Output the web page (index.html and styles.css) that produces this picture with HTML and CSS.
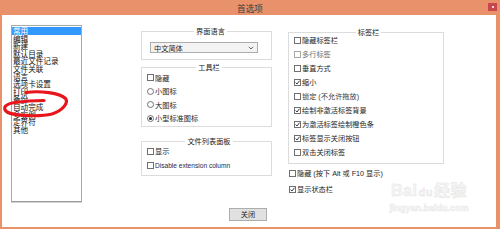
FILE: index.html
```html
<!DOCTYPE html>
<html lang="zh-CN">
<head>
<meta charset="utf-8">
<title>首选项</title>
<link rel="stylesheet" href="styles.css">
</head>
<body>
<div class="window">
  <div class="titlebar">
    <span class="title">首选项</span>
    <span class="close-btn"><span class="close-glyph"></span></span>
  </div>
  <div class="content">
    <div class="main">
      <ul class="nav">
        <li class="selected">常用</li>
        <li>编辑</li>
        <li>新建</li>
        <li>默认目录</li>
        <li>最近文件记录</li>
        <li>文件关联</li>
        <li>语言</li>
        <li>选项卡设置</li>
        <li>打印</li>
        <li>备份</li>
        <li>自动完成</li>
        <li>多实例</li>
        <li>定界符</li>
        <li>其他</li>
      </ul>
      <div class="col-mid">
        <fieldset class="group g-lang">
          <legend>界面语言</legend>
          <div class="select">
            <span>中文简体</span>
            <svg class="chev" width="6" height="4" viewBox="0 0 6 4"><path d="M0.8 0.8 L3 3 L5.2 0.8" fill="none" stroke="#555" stroke-width="0.9"/></svg>
          </div>
        </fieldset>
        <fieldset class="group g-toolbar">
          <legend>工具栏</legend>
          <div class="opt"><span class="cb"></span>隐藏</div>
          <div class="opt"><span class="rb"></span>小图标</div>
          <div class="opt"><span class="rb"></span>大图标</div>
          <div class="opt"><span class="rb on"></span>小型标准图标</div>
        </fieldset>
        <fieldset class="group g-files">
          <legend>文件列表面板</legend>
          <div class="opt row14"><span class="cb"></span>显示</div>
          <div class="opt row14 latin"><span class="cb"></span>Disable extension column</div>
        </fieldset>
      </div>
      <div class="col-right">
        <fieldset class="group g-tabs">
          <legend>标签栏</legend>
          <div class="opt row14"><span class="cb"></span>隐藏标签栏</div>
          <div class="opt row14 dim"><span class="cb dimbox"></span>多行标签</div>
          <div class="opt row14"><span class="cb"></span>垂直方式</div>
          <div class="opt row14"><span class="cb"><svg viewBox="0 0 5 5" width="5" height="5"><path d="M0.6 2.5 L2 4 L4.5 0.7" fill="none" stroke="#222" stroke-width="0.9"/></svg></span>缩小</div>
          <div class="opt row14 dim2"><span class="cb"></span>锁定 (不允许拖放)</div>
          <div class="opt row14"><span class="cb"><svg viewBox="0 0 5 5" width="5" height="5"><path d="M0.6 2.5 L2 4 L4.5 0.7" fill="none" stroke="#222" stroke-width="0.9"/></svg></span>绘制非激活标签背景</div>
          <div class="opt row14"><span class="cb"><svg viewBox="0 0 5 5" width="5" height="5"><path d="M0.6 2.5 L2 4 L4.5 0.7" fill="none" stroke="#222" stroke-width="0.9"/></svg></span>为激活标签绘制橙色条</div>
          <div class="opt row14"><span class="cb"><svg viewBox="0 0 5 5" width="5" height="5"><path d="M0.6 2.5 L2 4 L4.5 0.7" fill="none" stroke="#222" stroke-width="0.9"/></svg></span>标签显示关闭按钮</div>
          <div class="opt row14"><span class="cb"></span>双击关闭标签</div>
        </fieldset>
        <div class="opt row16 loose first"><span class="cb"></span>隐藏 (按下 Alt 或 F10 显示)</div>
        <div class="opt row16 loose"><span class="cb"><svg viewBox="0 0 5 5" width="5" height="5"><path d="M0.6 2.5 L2 4 L4.5 0.7" fill="none" stroke="#222" stroke-width="0.9"/></svg></span>显示状态栏</div>
      </div>
    </div>
    <div class="footer">
      <button class="btn" type="button">关闭</button>
    </div>
  </div>
  <div class="watermark">
    <div class="wm-logo">Bai<span class="wm-du">du</span>经验</div>
    <div class="wm-url">jingyan.baidu.com</div>
  </div>
  <svg class="annotation" width="500" height="229" viewBox="0 0 500 229">
    <path d="M26 92.5 C40 90.5 60 93 65.5 98.5 C69 103 62 111 52 114 C40 117 14 116 7 112 C2 108 5 104 15 102.5 C25 101 36 100.5 44 100.5" fill="none" stroke="#e8161c" stroke-width="3.2" stroke-linecap="round" stroke-linejoin="round"/>
  </svg>
</div>
</body>
</html>
```
FILE: styles.css
```css
html, body {
  margin: 0;
  padding: 0;
  background: #ffffff;
}

.window {
  position: relative;
  width: 500px;
  height: 229px;
  background: #e9916b;
  display: flex;
  flex-direction: column;
  overflow: hidden;
  font-family: "Liberation Sans", "Noto Sans CJK SC", sans-serif;
  color: #1e1e1e;
}

.titlebar {
  height: 15px;
  display: grid;
  grid-template-columns: 1fr auto 1fr;
  align-items: center;
}

.title {
  grid-column: 2;
  font-family: "Noto Sans CJK SC", sans-serif;
  font-size: 8.6px;
  line-height: 10px;
  color: #3a3a3a;
}

.close-btn {
  grid-column: 3;
  justify-self: end;
  width: 9px;
  height: 8px;
  margin-right: 3px;
  margin-top: -1px;
  background: #c8474b;
  display: flex;
  align-items: center;
  justify-content: center;
}

.close-glyph {
  width: 2px;
  height: 2px;
  background: #f4d6d6;
}

.content {
  flex: 1;
  background: #ffffff;
  margin: 0 4px 2px 2px;
  padding-top: 10px;
}

.main {
  display: flex;
  align-items: flex-start;
  padding-left: 9px;
}

.nav {
  box-sizing: border-box;
  width: 71px;
  height: 177px;
  margin: 0;
  padding: 1px 0 0;
  list-style: none;
  border: 1px solid #a9a9a9;
  border-bottom-color: #9a9a9a;
  box-shadow: 0 1px 0 #d4d4d4;
  font-family: "Noto Sans CJK SC", sans-serif;
  font-size: 7.6px;
  line-height: 7.6px;
  color: #111;
}

.nav li {
  height: 7.6px;
  padding-left: 1px;
  white-space: nowrap;
}

.nav li.selected {
  background: #3399ff;
  color: #ffffff;
}

.col-mid {
  width: 131px;
  margin-left: 59px;
  margin-top: 6px;
}

.col-right {
  width: 156px;
  margin-left: 16px;
  margin-top: 7px;
}

.group {
  margin: 0;
  border: 1px solid #dcdcdc;
  min-inline-size: 0;
  font-size: 7.2px;
}

.group legend {
  margin: 0 auto;
  padding: 0 2px;
  line-height: 1px;
  font-family: "Noto Sans CJK SC", sans-serif;
  font-size: 7.2px;
  color: #222;
}

.g-lang {
  padding: 10px 0 6px 8px;
}

.g-toolbar {
  margin-top: 7px;
  padding: 3px 0 1px 5px;
}

.g-files {
  margin-top: 14px;
  padding: 2px 0 3px 5px;
}

.g-tabs {
  padding: 0 0 4px 5px;
}

.select {
  box-sizing: border-box;
  width: 108px;
  height: 11px;
  border: 1px solid #adadad;
  background: #f3f3f3;
  display: flex;
  align-items: center;
  justify-content: space-between;
  padding: 0 3px 0 3px;
  font-family: "Noto Sans CJK SC", sans-serif;
  font-size: 7.2px;
}

.chev {
  display: block;
}

.opt {
  height: 13.5px;
  display: flex;
  align-items: center;
  white-space: nowrap;
  font-size: 7.2px;
}

.opt.row14 {
  height: 14px;
}

.opt.row16 {
  height: 16px;
}

.opt.loose {
  margin-left: 1px;
}

.opt.first {
  margin-top: 1px;
}

.opt.latin {
  font-size: 6.6px;
  color: #1e2a50;
}

.opt.dim {
  color: #6d6d6d;
}

.opt.dim2 {
  color: #3c3c3c;
}

.cb {
  box-sizing: border-box;
  width: 7px;
  height: 7px;
  border: 1px solid #707070;
  background: #ffffff;
  margin-right: 1px;
  flex: none;
  display: flex;
  align-items: center;
  justify-content: center;
}

.cb svg {
  display: block;
}

.cb.dimbox {
  border-color: #a6a6a6;
}

.rb {
  box-sizing: border-box;
  width: 7px;
  height: 7px;
  border: 1px solid #707070;
  border-radius: 50%;
  background: #ffffff;
  margin-right: 1px;
  flex: none;
  display: flex;
  align-items: center;
  justify-content: center;
}

.rb.on::after {
  content: "";
  width: 3px;
  height: 3px;
  border-radius: 50%;
  background: #222;
}

.footer {
  display: flex;
  justify-content: center;
  padding-right: 2px;
  margin-top: 6px;
}

.btn {
  box-sizing: border-box;
  width: 38px;
  height: 13px;
  margin: 0;
  padding: 0;
  border: 1px solid #adadad;
  background: #e1e1e1;
  font-family: "Noto Sans CJK SC", sans-serif;
  font-size: 7.2px;
  line-height: 11px;
  color: #1e1e1e;
}

.watermark {
  position: absolute;
  left: 383px;
  top: 180px;
  width: 92px;
  text-align: center;
  pointer-events: none;
}

.wm-logo {
  font-family: "Liberation Sans", "Noto Sans CJK SC", sans-serif;
  font-weight: bold;
  font-size: 16px;
  line-height: 22px;
  color: #f7f7f7;
  -webkit-text-stroke: 0.5px #e4e4e4;
  letter-spacing: 0.5px;
}

.wm-du {
  font-size: 11px;
  margin: 0 1px;
}

.wm-url {
  font-family: "Liberation Sans", sans-serif;
  font-weight: bold;
  font-size: 9px;
  line-height: 10px;
  color: #f5f5f5;
  -webkit-text-stroke: 0.4px #e6e6e6;
}

.annotation {
  position: absolute;
  left: 0;
  top: 0;
  pointer-events: none;
}
```
